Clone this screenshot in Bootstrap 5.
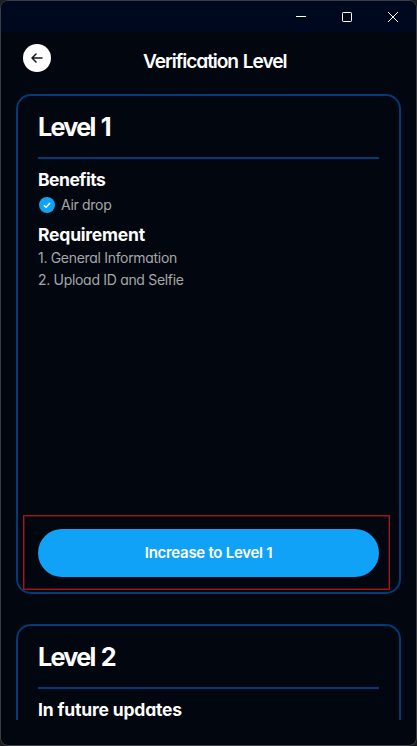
<!DOCTYPE html>
<html lang="en">
<head>
<meta charset="utf-8">
<meta name="viewport" content="width=device-width, initial-scale=1">
<title>Verification Level</title>
<link href="https://cdn.jsdelivr.net/npm/bootstrap@5.3.0/dist/css/bootstrap.min.css" rel="stylesheet">
<style>
html,body{height:746px;overflow:hidden;background:#1d1e1e}
body{font-family:Inter,"Open Sans",sans-serif;font-feature-settings:"cv11","ss03";color:#fff}
.app-window{height:746px;border:1px solid #3b3d3f;border-radius:8px;background:#02060e}
.title-bar{height:31px;background:#000820;padding-right:18px;gap:36px}
.page-head{height:62px}
.back-btn{width:28px;height:28px;margin:12px 0 0 22px}
.page-title{font-size:19.2px;line-height:24px;font-weight:600;letter-spacing:-1.08px;word-spacing:1px;margin:17px 0 0 92px}
.levels{height:626px;margin:0 15px}
.level-card{border:2px solid #033a78;border-radius:15px;height:500px;padding:0 20px;margin-bottom:30px}
.level-name{font-size:25.2px;line-height:32px;font-weight:700;letter-spacing:-1.75px;word-spacing:2px;padding:15px 0 14px;border-bottom:2px solid #033a78}
.sub{font-size:17.5px;line-height:22px;font-weight:700}
.benefits{margin-top:10px;letter-spacing:-.5px}
.future{letter-spacing:-.17px}
.require{margin-top:8px;letter-spacing:-.2px}
.item{font-size:14px;line-height:22px;color:#a5a7aa;letter-spacing:-.31px}
.airdrop{margin-top:3px;gap:6px;padding-left:1px}
.general{margin-top:1px}
.increase{height:48px;background:#0fa2f7;color:#fff;font-size:15px;font-weight:600;letter-spacing:-.28px;margin-bottom:15px}
.increase:hover{background:#0fa2f7;color:#fff}
.marker{left:5px;right:9px;bottom:2px;height:75px;border:1px solid #a5151c;outline:1px solid #4a0c14;outline-offset:-2px;pointer-events:none}
</style>
</head>
<body>
<div class="app-window overflow-hidden">
  <div class="title-bar d-flex justify-content-end align-items-center">
    <svg width="10" height="10"><path d="M0 4.5h10" stroke="#fff"/></svg>
    <svg width="10" height="10"><rect x=".5" y=".5" width="9" height="9" rx=".7" fill="none" stroke="#fff"/></svg>
    <svg width="10" height="10"><path d="M0 0l10 10M10 0L0 10" stroke="#fff"/></svg>
  </div>
  <header class="page-head d-flex align-items-start">
    <button class="back-btn btn bg-white rounded-circle border-0 p-0 d-flex align-items-center justify-content-center" aria-label="Back">
      <svg width="12" height="10" viewBox="0 0 12 10" fill="none" stroke="#111820" stroke-width="1.5" stroke-linecap="round" stroke-linejoin="round"><path d="M11 5H1.2M5 1L1 5l4 4"/></svg>
    </button>
    <h1 class="page-title text-nowrap">Verification Level</h1>
  </header>
  <main class="levels overflow-hidden">
    <section class="level-card position-relative d-flex flex-column">
      <h2 class="level-name mb-0">Level 1</h2>
      <h3 class="sub mb-0 benefits">Benefits</h3>
      <div class="item airdrop d-flex align-items-center">
        <svg width="16" height="16" viewBox="0 0 16 16"><circle cx="8" cy="8" r="8" fill="#0fa2f7"/><path d="M4.8 8.2L7 10.3l4.1-4.3" fill="none" stroke="#fff" stroke-width="1.4"/></svg>
        <span>Air drop</span>
      </div>
      <h3 class="sub mb-0 require">Requirement</h3>
      <div class="item general">1. General Information</div>
      <div class="item upload">2. Upload ID and Selfie</div>
      <button class="increase btn rounded-pill border-0 mt-auto w-100 p-0">Increase to Level 1</button>
      <div class="marker position-absolute"></div>
    </section>
    <section class="level-card">
      <h2 class="level-name mb-0">Level 2</h2>
      <h3 class="sub mb-0 benefits future">In future updates</h3>
    </section>
  </main>
</div>
<script src="https://cdn.jsdelivr.net/npm/bootstrap@5.3.0/dist/js/bootstrap.bundle.min.js"></script>
</body>
</html>
